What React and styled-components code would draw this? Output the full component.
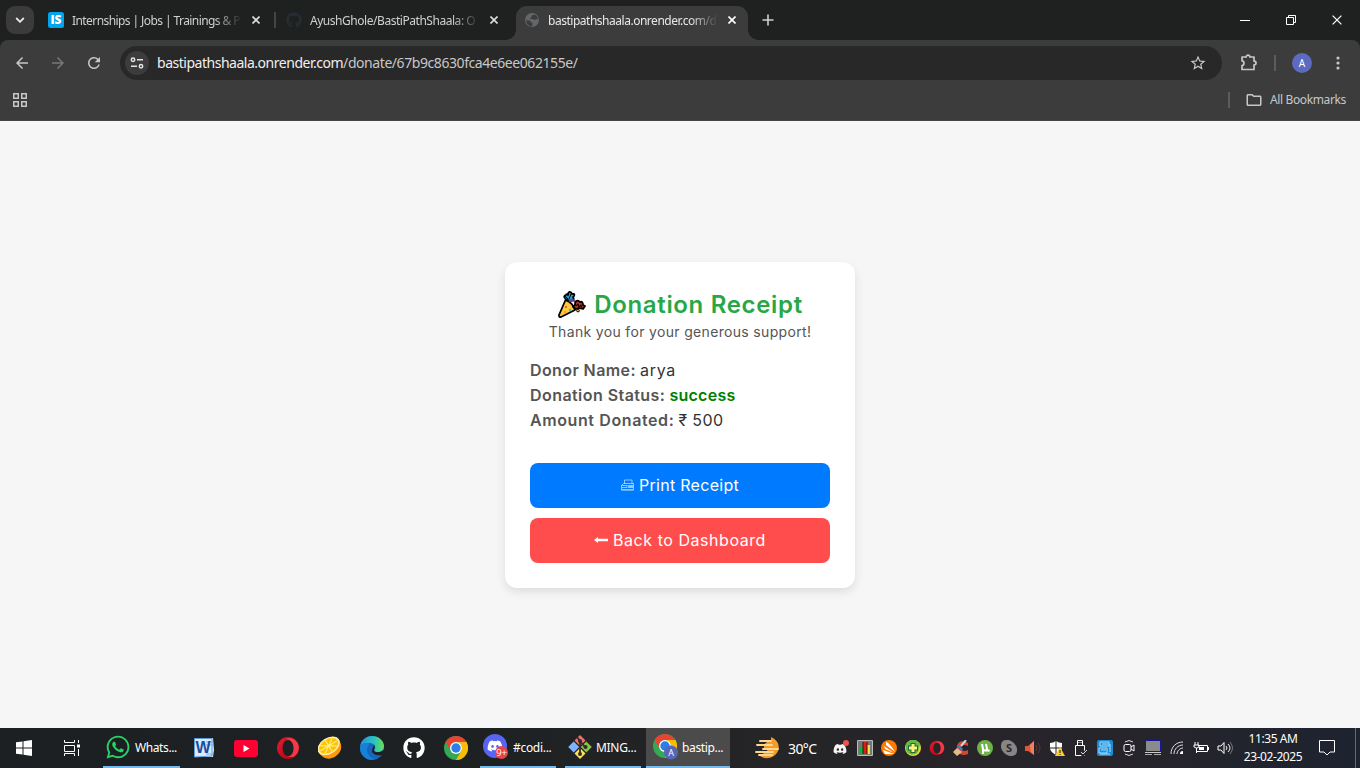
import React from "react";
import styled, { createGlobalStyle } from "styled-components";
import { FaGithub, FaDiscord, FaWhatsapp } from "react-icons/fa";
import { MdArrowBack, MdArrowForward, MdRefresh, MdStarBorder, MdOutlineFolder } from "react-icons/md";

const GlobalStyle = createGlobalStyle`
  * { box-sizing: border-box; }
  body { margin: 0; overflow: hidden; font-family: "Noto Sans", "Open Sans", sans-serif; }
  svg { display: block; flex: none; }
`;

const Screen = styled.div`
  width: 1360px;
  height: 768px;
  display: flex;
  flex-direction: column;
  background: #f6f6f6;
`;

/* ---------- browser ---------- */
const TabStrip = styled.header`
  height: 40px;
  flex: none;
  background: #1f2120;
  display: flex;
  align-items: flex-start;
  padding: 6px 0 0 6px;
`;
const TabSearch = styled.div`
  width: 28px;
  height: 28px;
  border-radius: 9px;
  background: #3b3b3b;
  display: grid;
  place-items: center;
`;
const Tab = styled.div`
  position: relative;
  width: ${(p) => p.$w}px;
  height: 34px;
  margin-left: ${(p) => p.$gap || 0}px;
  padding: 0 8px 6px;
  display: flex;
  align-items: center;
  gap: 8px;
  border-radius: 11px 11px 0 0;
  color: ${(p) => (p.$active ? "#e8e8e8" : "#d0d0d0")};
  background: ${(p) => (p.$active ? "#3c3c3c" : "transparent")};
  ${(p) =>
    p.$active &&
    `&::before, &::after {
      content: ""; position: absolute; bottom: 0; width: 10px; height: 10px;
    }
    &::before { left: -10px; background: radial-gradient(circle at 0 0, transparent 9.5px, #3c3c3c 10px); }
    &::after { right: -10px; background: radial-gradient(circle at 100% 0, transparent 9.5px, #3c3c3c 10px); }`}
`;
const TabTitle = styled.span`
  width: 168px;
  margin-right: 4px;
  padding-top: 2px;
  white-space: nowrap;
  font-size: 12px;
  line-height: 18px;
  letter-spacing: ${(p) => p.$ls}px;
  mask-image: linear-gradient(90deg, #000 142px, transparent 170px);
`;
const TabDivider = styled.i`
  width: 2px;
  height: 16px;
  margin: 6px 0 0 ${(p) => p.$gap}px;
  background: #444;
`;
const NewTab = styled.div`
  margin: 8px 0 0 14px;
`;
const WindowControls = styled.div`
  display: flex;
  margin-left: auto;
  height: 28px;
`;
const WindowButton = styled.div`
  width: 46px;
  display: grid;
  place-items: center;
`;
const TabBackdrop = styled.div`
  background: #1f2120;
  height: 81px;
  flex: none;
`;
const Toolbar = styled.div`
  height: 81px;
  background: #3c3c3c;
  border-radius: 8px 8px 0 0;
  border-bottom: 1px solid #454545;
  color: #c7c7c7;
`;
const AddressRow = styled.div`
  height: 46px;
  display: flex;
  align-items: center;
  padding-left: 13px;
`;
const NavButton = styled.div`
  width: 18px;
  margin-right: 18px;
  display: grid;
  place-items: center;
  color: ${(p) => (p.$dim ? "#777" : "#c7c7c7")};
`;
const AddressBar = styled.div`
  width: 1102px;
  height: 34px;
  margin-left: -1px;
  border-radius: 17px;
  background: #282828;
  display: flex;
  align-items: center;
  padding: 0 15px 0 5px;
`;
const SiteInfo = styled.div`
  width: 24px;
  height: 24px;
  border-radius: 12px;
  background: #3c3c3c;
  display: grid;
  place-items: center;
`;
const Url = styled.span`
  flex: 1;
  margin-left: 8px;
  font-size: 14px;
  line-height: 20px;
  letter-spacing: -0.43px;
  color: #c7c7c7;
  b { font-weight: 400; color: #f0f0f0; letter-spacing: -0.48px; }
`;
const BarDivider = styled.i`
  width: 2px;
  height: 16px;
  background: #5c5c5c;
`;
const AddressActions = styled.div`
  display: flex;
  align-items: center;
  gap: 16px;
  margin-left: 18px;
`;
const Avatar = styled.div`
  width: 20px;
  height: 20px;
  margin-right: 8px;
  border-radius: 50%;
  background: #5c6bc0;
  color: #fff;
  font-size: 10px;
  display: grid;
  place-items: center;
`;
const BookmarksRow = styled.div`
  height: 34px;
  padding: 0 14px 6px 13px;
  display: flex;
  align-items: center;
`;
const AllBookmarks = styled.div`
  margin-left: auto;
  display: flex;
  align-items: center;
  font-size: 12px;
  line-height: 16px;
  letter-spacing: -0.36px;
  white-space: nowrap;
  svg { margin: 0 7px 0 15px; }
`;

/* ---------- page ---------- */
const Page = styled.main`
  flex: 1;
  display: flex;
  align-items: center;
  justify-content: center;
  padding-top: 1px;
  font-family: Inter, "Noto Sans", sans-serif;
`;
const Card = styled.section`
  width: 350px;
  height: 326px;
  padding: 25px;
  border-radius: 12px;
  background: #fff;
  box-shadow: 0 4px 10px rgba(0, 0, 0, 0.1);
`;
const Title = styled.h1`
  margin: 0;
  height: 34px;
  padding-top: 1px;
  display: flex;
  align-items: center;
  justify-content: center;
  gap: 8px;
  font-size: 24px;
  line-height: 36px;
  font-weight: 600;
  letter-spacing: 0.67px;
  color: #28a745;
  white-space: nowrap;
`;
const Subtitle = styled.p`
  margin: 0 0 15px;
  height: 22px;
  text-align: center;
  font-size: 14px;
  line-height: 22px;
  letter-spacing: 0.33px;
  white-space: nowrap;
  color: #555;
`;
const Detail = styled.div`
  height: 25px;
  font-size: 16px;
  line-height: 25px;
  color: #333;
  white-space: nowrap;
`;
const Label = styled.strong`
  font-weight: 600;
  color: #555;
  letter-spacing: ${(p) => p.$ls}px;
`;
const Value = styled.span`
  margin-left: 4px;
  font-weight: ${(p) => (p.$success ? 600 : 400)};
  color: ${(p) => (p.$success ? "green" : "#333")};
  letter-spacing: ${(p) => p.$ls || 0}px;
`;
const Actions = styled.div`
  margin-top: 30px;
  display: flex;
  flex-direction: column;
  gap: 10px;
`;
const Button = styled.button`
  height: 45px;
  border: 0;
  border-radius: 8px;
  padding: 0 0 1px;
  display: flex;
  align-items: center;
  justify-content: center;
  gap: 5px;
  background: ${(p) => (p.$danger ? "#ff4d4d" : "#007bff")};
  color: #fff;
  font: 400 16px/24px Inter, sans-serif;
  letter-spacing: ${(p) => p.$ls}px;
`;

/* ---------- taskbar ---------- */
const Taskbar = styled.footer`
  height: 40px;
  flex: none;
  display: flex;
  background: linear-gradient(90deg, #1c2022 0, #1d2122 480px, #252427 760px, #27252b 1130px, #1d2330 1360px);
  color: #fff;
`;
const Launcher = styled.div`
  flex: none;
  width: ${(p) => p.$w || 42}px;
  display: grid;
  place-items: center;
`;
const Running = styled.div`
  flex: none;
  width: ${(p) => p.$w}px;
  margin: 0 ${(p) => p.$r || 0}px 0 ${(p) => p.$l || 0}px;
  padding-left: ${(p) => p.$pad}px;
  display: flex;
  align-items: center;
  gap: 4px;
  font-size: 12px;
  letter-spacing: ${(p) => p.$ls || 0}px;
  white-space: nowrap;
  background: ${(p) => (p.$active ? "#4b4b4c" : "transparent")};
  border-bottom: 2px solid #76b9ed;
`;
const Weather = styled.div`
  flex: none;
  width: 74px;
  margin-left: 25px;
  display: flex;
  align-items: center;
  gap: 8px;
  font-size: 14px;
  letter-spacing: -0.6px;
  white-space: nowrap;
`;
const TrayIcon = styled.div`
  flex: none;
  width: 24px;
  display: grid;
  place-items: center;
`;
const Clock = styled.div`
  flex: none;
  width: 72px;
  display: flex;
  flex-direction: column;
  justify-content: center;
  align-items: center;
  font-size: 12px;
  line-height: 18px;
  letter-spacing: -0.42px;
  white-space: nowrap;
`;
const ShowDesktop = styled.i`
  width: 5px;
  margin-left: auto;
  border-left: 1px solid #666b74;
`;

const Svg = ({ w = 16, h = w, vb, children, ...rest }) => (
  <svg width={w} height={h} viewBox={vb || `0 0 ${w} ${h}`} fill="none" {...rest}>{children}</svg>
);
const Cross = ({ size = 8, color = "#dedede", width = 1.6 }) => (
  <Svg w={size} vb="0 0 8 8"><path d="M.5.5l7 7M7.5.5l-7 7" stroke={color} strokeWidth={width} /></Svg>
);
const OperaIcon = ({ size }) => (
  <Svg w={size} vb="0 0 24 24">
    <defs><linearGradient id="op" x2="1" y2="1"><stop stopColor="#e81b2e" /><stop offset="1" stopColor="#a70014" /></linearGradient></defs>
    <path fillRule="evenodd" d="M12 1a11 11 0 100 22 11 11 0 000-22zm0 3c3.3 0 5.4 3.5 5.4 8s-2.1 8-5.4 8-5.4-3.500-5.400-8S8.700 4 12 4z" fill="url(#op)" />
    <path d="M10 3.500C13 1 19 2.300 21.700 7c2.500 5 .5 11-3.700 13.500-2 .8-4.500.7-7-.5 4.500 1 6.700-3.500 6.700-8S15 3 10 3.500z" fill="#ff4c55" opacity=".75" />
  </Svg>
);
const ChromeIcon = () => (
  <Svg w={24} vb="0 0 24 24">
    <circle cx="12" cy="12" r="12" fill="#34a853" />
    <path d="M12 0a12 12 0 0110.400 6H12a6 6 0 00-5.200 9L1.600 6A12 12 0 0112 0z" fill="#ea4335" />
    <path d="M22.400 6A12 12 0 0112 24l5.200-9A6 6 0 0012 6z" fill="#fbbc05" />
    <circle cx="12" cy="12" r="6" fill="#fff" /><circle cx="12" cy="12" r="4.700" fill="#2f7de9" />
  </Svg>
);
const PartyIcon = () => (
  <Svg w={29} h={29} stroke="#000" strokeWidth="1.800" strokeLinejoin="round">
    <path d="M8.500 10L2 25c-.3 1.600.7 2.300 2 2l14-7c-1-4-5-9-9.500-10z" fill="#ffc83d" />
    <path d="M11 10c-4-1-5-4-2-5 0-1 2-1 2 0 0-4 3-4 4-1 3-1 3 2 1 3 2 3-1 4-3 4z" fill="#209fd0" />
    <path d="M8 6l3 3M14 4l-2 5" strokeWidth="1" />
    <path d="M12 11c4-2 7 0 8 4" stroke="#6d4590" strokeWidth="2.400" />
    <path d="M18 15c0-5 3-5 5-3 2-1 3 1 3 3l2 1-2 3-4-1-3 1-3-2z" fill="#c93729" />
    <path d="M19 16l2-2 1 3 2-2 1 3" strokeWidth="1.100" />
    <circle cx="21" cy="20.500" r="1.400" fill="#ffc83d" strokeWidth="1" />
    <circle cx="9" cy="17" r="1" fill="#e34a43" stroke="none" /><circle cx="13" cy="20" r="1.200" fill="#2ec0ce" stroke="none" /><circle cx="8" cy="22" r="1" fill="#e99a24" stroke="none" />
  </Svg>
);

function Browser() {
  return (
    <>
      <TabStrip>
        <TabSearch><Svg w={10} h={6}><path d="M1.200 1l3.800 3.800L8.800 1" stroke="#e8e8e8" strokeWidth="1.800" /></Svg></TabSearch>
        <Tab $w={235} $gap={6}>
          <Svg w={16}><rect width="16" height="16" rx="2.500" fill="#00a5ec" /><text x="8" y="12.200" textAnchor="middle" fontFamily="Open Sans" fontSize="12" fontWeight="800" fill="#fff">IS</text></Svg>
          <TabTitle $ls={-0.58}>Internships | Jobs | Trainings &amp; P</TabTitle><Cross />
        </Tab>
        <TabDivider $gap={-1} />
        <Tab $w={236} $gap={2}>
          <FaGithub size={16} color="#252c33" />
          <TabTitle $ls={-0.46}>AyushGhole/BastiPathShaala: O</TabTitle><Cross />
        </Tab>
        <Tab $active $w={232} $gap={2}>
          <Svg w={16}><circle cx="8" cy="8" r="7" fill="#62676c" /><path d="M2.200 8.200c2 .2 4.300-.2 4.500 1.500.2 1.200 1.800.6 1.800 2 0 1-.5 1.300-.4 2.600-3 .2-6-2.700-5.900-6.100zM10 2.400c-1 .8-2.500.5-2.300 2C7.800 5.500 6 5 6.300 6.800c1.300.8 2.200-.3 3.300.6.7.6 2 .4 2.500-.5l2 .7c.1-2.400-1.600-4.700-4.100-5.200z" fill="#3c3c3c" /></Svg>
          <TabTitle $ls={-0.48}>bastipathshaala.onrender.com/d</TabTitle><Cross color="#fff" />
        </Tab>
        <NewTab><Svg w={12}><path d="M6 .5v11M.5 6h11" stroke="#d0d0d0" strokeWidth="1.600" /></Svg></NewTab>
        <WindowControls>
          <WindowButton><Svg w={10} h={1}><path d="M0 .5h10" stroke="#fff" /></Svg></WindowButton>
          <WindowButton><Svg w={10}><path d="M.5 2.500h7v7h-7zM2.500 2.500v-2h7v7h-2" stroke="#fff" /></Svg></WindowButton>
          <WindowButton><Cross size={10} color="#fff" width={1} /></WindowButton>
        </WindowControls>
      </TabStrip>
      <TabBackdrop>
        <Toolbar>
          <AddressRow>
            <NavButton><MdArrowBack size={18} /></NavButton>
            <NavButton $dim><MdArrowForward size={18} /></NavButton>
            <NavButton><MdRefresh size={18} /></NavButton>
            <AddressBar>
              <SiteInfo><Svg w={14} h={12}><circle cx="3" cy="2.700" r="1.700" stroke="#e3e3e3" strokeWidth="1.500" /><path d="M7 2.700h6M1 9.300h6" stroke="#e3e3e3" strokeWidth="1.500" /><circle cx="11" cy="9.300" r="1.700" stroke="#e3e3e3" strokeWidth="1.500" /></Svg></SiteInfo>
              <Url><b>bastipathshaala.onrender.com</b>/donate/67b9c8630fca4e6ee062155e/</Url>
              <MdStarBorder size={18} />
            </AddressBar>
            <AddressActions>
              <Svg w={18}><path d="M2 3h4.200c0-2.600 3.600-2.600 3.600 0H14v4.200c2.700 0 2.700 3.600 0 3.600V15.500H2v-3.800c2.600-.4 2.600-4.500 0-4.900z" stroke="#c7c7c7" strokeWidth="1.700" strokeLinejoin="round" /></Svg>
              <BarDivider />
              <Avatar>A</Avatar>
              <Svg w={4} h={14}><g fill="#c7c7c7"><circle cx="2" cy="2" r="1.600" /><circle cx="2" cy="7" r="1.600" /><circle cx="2" cy="12" r="1.600" /></g></Svg>
            </AddressActions>
          </AddressRow>
          <BookmarksRow>
            <Svg w={14}><path d="M.75.75h4.500v4.500H.75zM8.750.75h4.500v4.500h-4.500zM.75 8.750h4.500v4.500H.75zM8.750 8.750h4.500v4.500h-4.500z" stroke="#c7c7c7" strokeWidth="1.500" /></Svg>
            <AllBookmarks><BarDivider /><MdOutlineFolder size={18} />All Bookmarks</AllBookmarks>
          </BookmarksRow>
        </Toolbar>
      </TabBackdrop>
    </>
  );
}

function Receipt() {
  return (
    <Page>
      <Card>
        <Title><PartyIcon />Donation Receipt</Title>
        <Subtitle>Thank you for your generous support!</Subtitle>
        <Detail><Label $ls={0.4}>Donor Name:</Label><Value $ls={0.75}>arya</Value></Detail>
        <Detail><Label $ls={0.44}>Donation Status:</Label><Value $success $ls={0.27}>success</Value></Detail>
        <Detail><Label $ls={0.6}>Amount Donated:</Label><Value $ls={0.4}>₹ 500</Value></Detail>
        <Actions>
          <Button $ls={0.3}>
            <Svg w={13} h={12}><path d="M3.500 5V1h7.500v4M.5 6.500H6v2H.5zM.5 8.500v2.700h12V4.500H2.500L.5 6.500" stroke="#b8dcff" strokeWidth=".8" /><path d="M7 6h5v3H7zM1 10h11v1H1z" fill="#8fc6ff" /></Svg>
            Print Receipt
          </Button>
          <Button $danger $ls={0.55}>
            <Svg w={14} h={8}><path d="M0 4l4-3v1.700h10v2.600H4V7z" fill="#fff" /></Svg>
            Back to Dashboard
          </Button>
        </Actions>
      </Card>
    </Page>
  );
}

const DiscordApp = () => (
  <Svg w={26} h={26}>
    <circle cx="12" cy="12" r="12" fill="#5865f2" /><FaDiscord x="4" y="4" size={16} color="#fff" />
    <circle cx="18.500" cy="18.500" r="6.500" fill="#ed4245" /><text x="18.500" y="22" textAnchor="middle" fontFamily="Open Sans" fontSize="9.500" fill="#fff">9+</text>
  </Svg>
);

function TaskbarRow() {
  return (
    <Taskbar>
      <Launcher $w={48}><Svg w={16}><path d="M0 2.300L6.500 1.400v6.100H0zM7.500 1.200L16 0v7.500H7.500zM0 8.500h6.500v6.100L0 13.700zM7.500 8.500H16V16l-8.500-1.200z" fill="#fff" /></Svg></Launcher>
      <Launcher $w={48}><Svg w={16}><path d="M.5 0v2.500h10V0M.5 5.500h10v6H.5zM.5 16v-2.500h10V16M14.500 0v3M14.500 9v7" stroke="#fff" /><path d="M13 4.500h3v3h-3z" fill="#fff" /></Svg></Launcher>
      <Running $w={77} $l={7} $r={3} $pad={2} $ls={-0.4}><FaWhatsapp size={26} color="#25d366" />Whats...</Running>
      <Launcher>
        <Svg w={22}><path d="M2 1h18l1 12-1 7H2L1 11z" fill="#dceaf9" /><path d="M1.500 1.500H19V19L1.500 20z" stroke="#5c9be0" /><path d="M13 5h7M13 8h7M13 17h7" stroke="#81aadf" /><text x="10" y="15.500" textAnchor="middle" fontFamily="Liberation Sans" fontWeight="bold" fontSize="16" fill="#174da5">W</text></Svg>
      </Launcher>
      <Launcher><Svg w={24} h={17}><rect width="24" height="17" rx="3" fill="#f03" /><path d="M9.500 5l6 3.500-6 3.500z" fill="#fff" /></Svg></Launcher>
      <Launcher><OperaIcon size={24} /></Launcher>
      <Launcher>
        <Svg w={24}><g transform="rotate(-32 12 12)"><path d="M0 9c0-7 24-7 24 0 0 9-5 13-12 13S0 18 0 9z" fill="#ff980b" /><ellipse cx="12" cy="9.500" rx="12" ry="8" fill="#fff0b0" /><ellipse cx="12" cy="9.500" rx="10.500" ry="6.700" fill="#ffc400" /><path d="M2 9.500h20M12 3v13M5 5l14 9M19 5L5 14" stroke="#fff3a2" strokeWidth="1" /></g></Svg>
      </Launcher>
      <Launcher>
        <Svg w={24}>
          <defs><linearGradient id="ed" x2="1"><stop stopColor="#2292e5" /><stop offset=".6" stopColor="#2cc3bc" /><stop offset="1" stopColor="#6be054" /></linearGradient></defs>
          <circle cx="12" cy="12" r="12" fill="#1467bd" />
          <path d="M0 11C1 4 6 0 12 0c7 0 12 5 12 10 0 4-3 6-6 6-3 0-5-1-3-3 1-4-2-6-6-6-5 0-8 1-9 4z" fill="url(#ed)" />
          <path d="M10 8c-5 3-4 13 5 15-8 3-15-4-15-11 0-5 7-6 10-4z" fill="#1681d6" />
          <path d="M14 9c2 2 0 4 0 5 0 3 6 3 9.500 0L24 17l-2 2c-5 1-11-1-10-5z" fill="#1c2022" />
        </Svg>
      </Launcher>
      <Launcher><FaGithub size={22} color="#fff" /></Launcher>
      <Launcher><ChromeIcon /></Launcher>
      <Running $w={76} $l={3} $r={9} $pad={3} $ls={-0.3}><DiscordApp />#codi...</Running>
      <Running $w={76} $r={5} $pad={3} $ls={-0.3}>
        <Svg w={24}><g strokeLinejoin="round"><path d="M12 0l5.500 5.500-5.500 5.500-5.500-5.500z" fill="#f0716b" /><path d="M5.700 6.500l5.500 5.500-5.500 5.500L.2 12z" fill="#80b3ff" /><path d="M18.300 6.500l5.500 5.500-5.500 5.500-5.500-5.500z" fill="#8dc149" /><path d="M12 13l5.500 5.500L12 24l-5.500-5.500z" fill="#ffe05a" /></g><path d="M9 2l3 4v14M12 6l5 6" stroke="#302c2b" strokeWidth="1.800" /><g fill="#302c2b"><circle cx="12" cy="6" r="2" /><circle cx="12" cy="19" r="2" /><circle cx="17.500" cy="12" r="2" /></g></Svg>
        MING...
      </Running>
      <Running $active $w={84} $pad={7} $ls={-0.35}>
        <Svg w={25} h={26}><ChromeIcon /><circle cx="18" cy="18.500" r="7" fill="#5666b8" /><text x="18" y="22" textAnchor="middle" fontSize="9" fill="#fff" fontFamily="Open Sans">A</text></Svg>
        bastip...
      </Running>
      <Weather>
        <Svg w={25} h={22}><path d="M16 0c7 3 9 9 7 14-3 7-13 10-19 4C9 17 17 13 16 0z" fill="#f39c2b" /><path d="M9 12c-1-5 4-9 8-8l5 6-2 6z" fill="#f39c2b" /><path d="M5 4h11M2 8h15M8 12h15M1 15h17M4 18h13" stroke="#ffd78c" strokeWidth="1.900" strokeLinecap="round" /></Svg>
        30°C
      </Weather>
      <TrayIcon><Svg w={16}><FaDiscord y="2" size={14} color="#f4f4f4" /><circle cx="13" cy="3" r="3" fill="#ef5350" /></Svg></TrayIcon>
      <TrayIcon><Svg w={16}><path d="M.5.5h15v15H.5z" fill="#777" stroke="#bbb" /><path d="M3 7h3v7H3z" fill="#00bd2d" /><path d="M6 2h4v12H6z" fill="#e21c18" /><path d="M10 5h3v9h-3z" fill="#eee337" /><path d="M6 2v12M10 2v12" stroke="#3b1515" /></Svg></TrayIcon>
      <TrayIcon><Svg w={16}><circle cx="8" cy="8" r="8" fill="#ff7800" /><path d="M5 2c2 0 7 6 9 10L5 5zM3 6l10 7-9-4zM2 10l11 4H4z" fill="#fff" /></Svg></TrayIcon>
      <TrayIcon><Svg w={16}><circle cx="8" cy="8" r="8" fill="#f4d52c" /><path d="M1 4a8 8 0 0114 0l-2 8a7 7 0 01-12-2z" fill="#62b943" /><path d="M8 3v10M3 8h10" stroke="#176d36" strokeWidth="5" /><path d="M8 4v8M4 8h8" stroke="#fff27c" strokeWidth="3" /></Svg></TrayIcon>
      <TrayIcon><OperaIcon size={16} /></TrayIcon>
      <TrayIcon><Svg w={16}><path d="M15 3C9-1 3 2 4 9c1 6 6 7 11 5v-4c-4 2-7 1-7-2 0-3 3-4 7-2z" fill="#d44632" /><path d="M13 0L8 6" stroke="#c3dceb" strokeWidth="2" /><path d="M4 8l5 4-5 4-4-4z" fill="#e6bc86" /><path d="M4 7l5 4 1-2-4-4z" fill="#3282cc" /></Svg></TrayIcon>
      <TrayIcon><Svg w={16}><circle cx="8" cy="8" r="8" fill="#6fb348" /><path d="M5 4l1 5c.3 2 3.500 2 4 0L9 4M9.500 9c.5 2 2 2 3 1M6 9v5" stroke="#fff" strokeWidth="2" /></Svg></TrayIcon>
      <TrayIcon><Svg w={16}><rect width="12" height="12" rx="5" fill="#868686" /><rect x="4" y="4" width="12" height="12" rx="5" fill="#868686" /><circle cx="8" cy="8" r="7" fill="#868686" /><text x="8" y="12" textAnchor="middle" fontFamily="Open Sans" fontWeight="bold" fontSize="11" fill="#2b2b2b">S</text></Svg></TrayIcon>
      <TrayIcon><Svg w={16}><path d="M0 6h3l6-5v14l-6-4H0z" fill="#da593c" /><path d="M5 5l4-4v14l-3-3z" fill="#f18062" /><path d="M11 5q2 3 0 6M13 3q4 5 0 10" stroke="#66352d" /></Svg></TrayIcon>
      <TrayIcon><Svg w={16}><path d="M7 1c2 1 4 2 6 2v5c0 3-3 5-6 7-3-2-6-4-6-7V3c2 0 4-1 6-2z" fill="#fff" /><path d="M7 1v14M1 8h12" stroke="#222" /><path d="M11 7l5 9H6z" fill="#ffc928" /><path d="M11 10v3M11 14v1" stroke="#222" /></Svg></TrayIcon>
      <TrayIcon><Svg w={14} h={16}><path d="M3.500 5V.5h5V5M1.500 5.500h9v10h-9zM5 2v1M7 2v1" stroke="#fff" /><path d="M6 12l3 3 4-5" stroke="#27252b" strokeWidth="3" /><path d="M7 12l2 2 4-4" stroke="#ddd" /></Svg></TrayIcon>
      <TrayIcon><Svg w={16}><rect width="16" height="16" rx="2" fill="#1b8bd5" /><path d="M3 2h9v4H3zM2 8h8v5H2zM13 4v8M5 4h6M4 10h5M3 14h10" stroke="#a7e0ff" /></Svg></TrayIcon>
      <TrayIcon><Svg w={14} h={16}><path d="M3 2q4-3 8 0M3 14q4 3 8 0" stroke="#ddd" /><rect x="2" y="4.500" width="7" height="7" rx="1.500" stroke="#fff" /><path d="M9 7l3-2v6L9 9" stroke="#fff" /></Svg></TrayIcon>
      <TrayIcon><Svg w={16}><path d="M.5.5h15v11H.5z" fill="#8b8b8b" stroke="#16169a" /><path d="M0 12.500h16" stroke="#ccc" /><path d="M0 14h7v1H0zM9 14h7v1H9z" fill="#aaa" /></Svg></TrayIcon>
      <TrayIcon><Svg w={14}><path d="M1 13C1 6 6 1 13 1M4 13c0-5 4-9 9-9M7 13c0-3 3-6 6-6" stroke="#ddd" /><path d="M10 13c0-2 1-3 3-3v3z" fill="#fff" /></Svg></TrayIcon>
      <TrayIcon><Svg w={16} h={12}><path d="M5 3.500h9.500v6H4M2 0v3M5 0v3M1 3h5v2L4 6H3L1 5zM3.500 6v5M15.500 5v3" stroke="#fff" /><path d="M6 5h5v3H6z" fill="#fff" /></Svg></TrayIcon>
      <TrayIcon><Svg w={17} h={14}><path d="M1 5h3l3-3.500v11L4 9H1z" stroke="#fff" /><path d="M9 5q2 2 0 4M11 3q4 4 0 8" stroke="#eee" /><path d="M13 1q5 6 0 12" stroke="#777" /></Svg></TrayIcon>
      <Clock><span>11:35 AM</span><span>23-02-2025</span></Clock>
      <Launcher $w={36}><Svg w={16} h={16}><path d="M.5.500h15v11.500H11L8 15l-3-3H.5z" stroke="#fff" /></Svg></Launcher>
      <ShowDesktop />
    </Taskbar>
  );
}

export default function App() {
  return (
    <Screen>
      <GlobalStyle />
      <Browser />
      <Receipt />
      <TaskbarRow />
    </Screen>
  );
}
